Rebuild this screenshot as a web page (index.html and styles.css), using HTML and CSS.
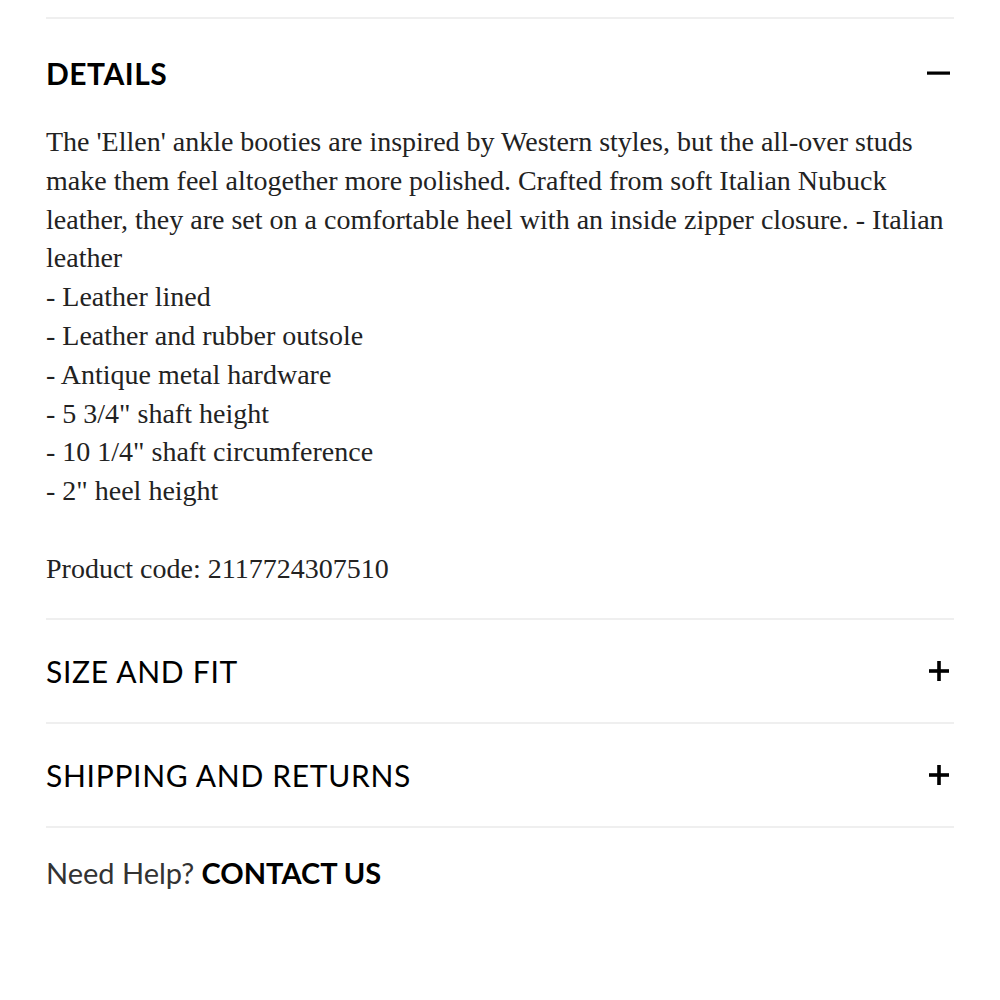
FILE: index.html
```html
<!DOCTYPE html>
<html lang="en">
<head>
<meta charset="utf-8">
<title>Details</title>
<link rel="stylesheet" href="styles.css">
</head>
<body>
<div class="page">
  <section class="acc acc-open">
    <div class="acc-head acc-head-first">
      <h2 class="acc-title acc-title-bold">DETAILS</h2>
      <svg class="acc-icon" width="24" height="24" viewBox="0 0 24 24"><rect x="0" y="10.5" width="23" height="3.2" fill="#000"/></svg>
    </div>
    <div class="acc-body">
      The 'Ellen' ankle booties are inspired by Western styles, but the all-over studs make them feel altogether more polished. Crafted from soft Italian Nubuck leather, they are set on a comfortable heel with an inside zipper closure. - Italian leather<br>
      - Leather lined<br>
      - Leather and rubber outsole<br>
      - Antique metal hardware<br>
      - 5 3/4" shaft height<br>
      - 10 1/4" shaft circumference<br>
      - 2" heel height<br>
      <br>
      Product code: 2117724307510
    </div>
  </section>
  <section class="acc">
    <div class="acc-head">
      <h2 class="acc-title">SIZE AND FIT</h2>
      <svg class="acc-icon" width="24" height="24" viewBox="0 0 24 24"><rect x="2" y="10.2" width="20" height="3.6" fill="#000"/><rect x="10.2" y="2" width="3.6" height="20" fill="#000"/></svg>
    </div>
  </section>
  <section class="acc">
    <div class="acc-head">
      <h2 class="acc-title">SHIPPING AND RETURNS</h2>
      <svg class="acc-icon" width="24" height="24" viewBox="0 0 24 24"><rect x="2" y="10.2" width="20" height="3.6" fill="#000"/><rect x="10.2" y="2" width="3.6" height="20" fill="#000"/></svg>
    </div>
  </section>
  <p class="help">Need Help? <a class="help-link" href="#">CONTACT US</a></p>
</div>
</body>
</html>
```

FILE: styles.css
```css
html, body {
  margin: 0;
  padding: 0;
  background: #fff;
}
.page {
  padding: 17px 46px 0;
}
.acc {
  border-top: 2px solid #efefef;
}
.acc-head {
  height: 102px;
  display: flex;
  align-items: center;
  justify-content: space-between;
}
.acc-head-first {
  padding-top: 4px;
  height: 100px;
}
.acc-title {
  margin: 0;
  font-family: "Lato", "Noto Sans", sans-serif;
  font-weight: 400;
  font-size: 30px;
  letter-spacing: 0.7px;
  color: #000;
}
.acc-title-bold {
  font-weight: 700;
  letter-spacing: 0.5px;
}
.acc-icon {
  display: block;
  margin-right: 3px;
}
.acc-body {
  font-family: "Liberation Serif", serif;
  font-size: 28px;
  line-height: 38.8px;
  color: #222;
  padding-bottom: 29px;
}
.help {
  border-top: 2px solid #efefef;
  margin: 0;
  padding-top: 27px;
  font-family: "Lato", "Noto Sans", sans-serif;
  font-size: 29px;
  color: #333;
}
.help-link {
  color: #000;
  font-weight: 700;
  text-decoration: none;
}
```
